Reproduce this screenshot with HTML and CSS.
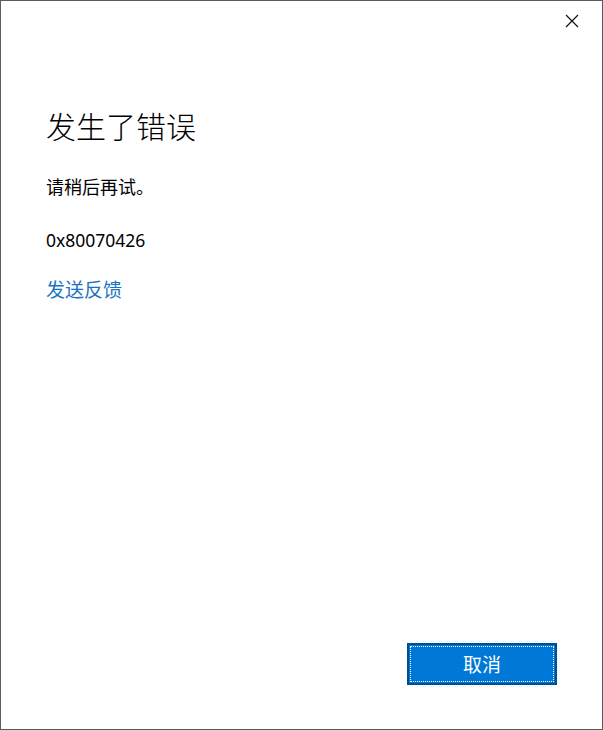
FILE: index.html
```html
<!DOCTYPE html>
<html lang="zh-CN">
<head>
    <meta charset="UTF-8">
    <meta name="viewport" content="width=device-width, initial-scale=1.0">
    <title>发生了错误</title>
    <link rel="stylesheet" href="styles.css">
</head>
<body>

    <div class="dialog">
        <div class="title-bar">
            <button class="close-btn" aria-label="关闭">
                <svg width="14" height="14" viewBox="0 0 14 14">
                    <path d="M1 1 L13 13 M13 1 L1 13" stroke="#111" stroke-width="1.2" fill="none"/>
                </svg>
            </button>
        </div>

        <div class="content">
            <h1 class="heading">发生了错误</h1>
            <p class="message">请稍后再试。</p>
            <p class="code">0x80070426</p>
            <a class="feedback-link" href="#">发送反馈</a>
        </div>

        <div class="footer">
            <button class="primary-btn"><span class="focus-rect">取消</span></button>
        </div>
    </div>

</body>
</html>
```

FILE: styles.css
```css
:root {
    --border-color: #5c5c5c;
    --text-color: #000000;
    --link-color: #1a73c4;
    --accent: #0078d7;
    --accent-dark: #004f8f;
}

* {
    margin: 0;
    padding: 0;
    box-sizing: border-box;
}

body {
    font-family: "Noto Sans", "Noto Sans CJK SC", sans-serif;
    background-color: #ffffff;
    color: var(--text-color);
}

.dialog {
    width: 603px;
    height: 730px;
    border: 1px solid var(--border-color);
    display: flex;
    flex-direction: column;
}

.title-bar {
    display: flex;
    justify-content: flex-end;
    padding: 13px 23px 0 0;
}

.close-btn {
    background: transparent;
    border: none;
    width: 14px;
    height: 14px;
    display: flex;
}

.content {
    flex-grow: 1;
    padding: 79px 0 0 45px;
    display: flex;
    flex-direction: column;
    align-items: flex-start;
}

.heading {
    font-size: 30px;
    font-weight: 300;
    line-height: 40px;
    margin-bottom: 27px;
}

.message {
    font-size: 18px;
    line-height: 26px;
    margin-bottom: 27px;
}

.code {
    font-size: 17.5px;
    line-height: 26px;
    margin-bottom: 24px;
}

.feedback-link {
    font-size: 19px;
    line-height: 26px;
    color: var(--link-color);
    text-decoration: none;
}

.footer {
    display: flex;
    justify-content: flex-end;
    padding: 0 45px 44px 0;
}

.primary-btn {
    width: 150px;
    height: 42px;
    background-color: var(--accent);
    border: 2px solid var(--accent-dark);
    padding: 1px;
    display: flex;
    font-family: inherit;
}

.focus-rect {
    flex-grow: 1;
    border: 1px dotted #ffffff;
    color: #ffffff;
    font-size: 19px;
    display: flex;
    align-items: center;
    justify-content: center;
}
```
